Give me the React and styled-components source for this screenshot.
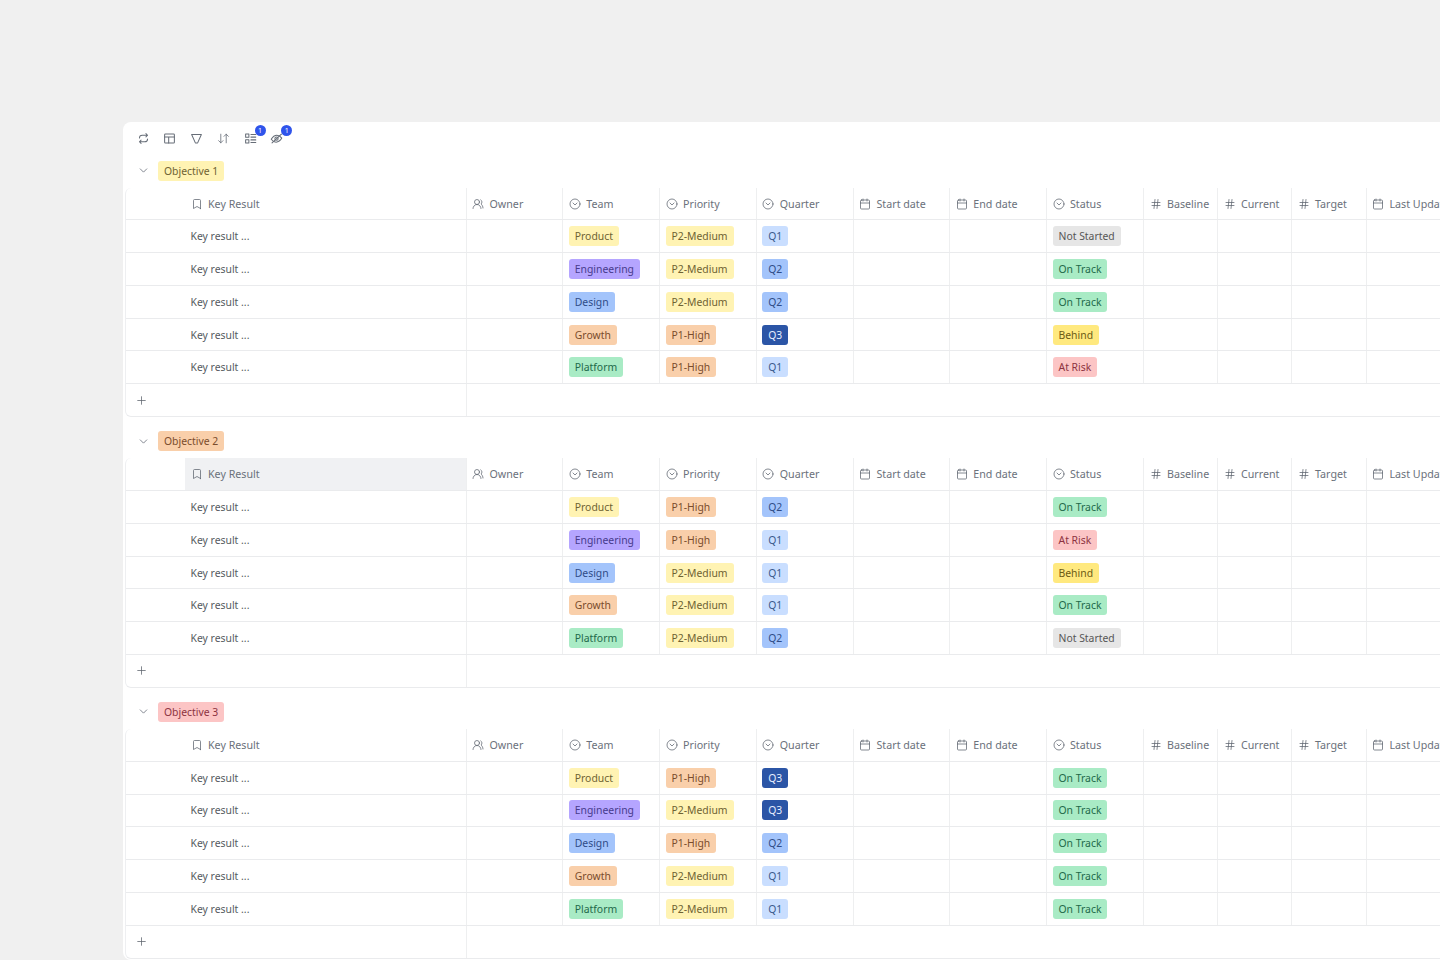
import React from "react";
import styled, { createGlobalStyle } from "styled-components";
import {
  ArrowDownUp,
  Bookmark,
  Calendar,
  ChevronDown,
  CircleChevronDown,
  Hash,
  Plus,
  UsersRound,
} from "lucide-react";

const GlobalStyle = createGlobalStyle`
  html, body {
    margin: 0;
    height: 960px;
    overflow: hidden;
    background: #f0f0f0;
    font-family: "Noto Sans", "Open Sans", sans-serif;
  }
`;

const COLUMNS = "59px 281.5px repeat(6, 96.75px) 97px 74px 74px 74.5px 120px";

const tones = {
  yellow: ["#fff3b3", "#6e6232"],
  gold: ["#ffe97f", "#6b5a14"],
  purple: ["#b5a5ff", "#473b8c"],
  blue: ["#a3c4fb", "#2f4c87"],
  orange: ["#f9cfaa", "#7a4c2c"],
  green: ["#a9ebc5", "#22694a"],
  light: ["#c9deff", "#3b5a8c"],
  navy: ["#2b55a6", "#e6eeff"],
  grey: ["#e6e6e6", "#565656"],
  red: ["#fcc5c5", "#8c3341"],
};

const teamTone = { Product: "yellow", Engineering: "purple", Design: "blue", Growth: "orange", Platform: "green" };
const priorityTone = { "P2-Medium": "yellow", "P1-High": "orange" };
const quarterTone = { Q1: "light", Q2: "blue", Q3: "navy" };
const statusTone = { "Not Started": "grey", "On Track": "green", Behind: "gold", "At Risk": "red" };

const objectives = [
  {
    name: "Objective 1",
    tone: "yellow",
    rows: [
      ["Product", "P2-Medium", "Q1", "Not Started"],
      ["Engineering", "P2-Medium", "Q2", "On Track"],
      ["Design", "P2-Medium", "Q2", "On Track"],
      ["Growth", "P1-High", "Q3", "Behind"],
      ["Platform", "P1-High", "Q1", "At Risk"],
    ],
  },
  {
    name: "Objective 2",
    tone: "orange",
    hovered: true,
    rows: [
      ["Product", "P1-High", "Q2", "On Track"],
      ["Engineering", "P1-High", "Q1", "At Risk"],
      ["Design", "P2-Medium", "Q1", "Behind"],
      ["Growth", "P2-Medium", "Q1", "On Track"],
      ["Platform", "P2-Medium", "Q2", "Not Started"],
    ],
  },
  {
    name: "Objective 3",
    tone: "red",
    rows: [
      ["Product", "P1-High", "Q3", "On Track"],
      ["Engineering", "P2-Medium", "Q3", "On Track"],
      ["Design", "P1-High", "Q2", "On Track"],
      ["Growth", "P2-Medium", "Q1", "On Track"],
      ["Platform", "P2-Medium", "Q1", "On Track"],
    ],
  },
];

const headers = [
  [UsersRound, "Owner"],
  [CircleChevronDown, "Team"],
  [CircleChevronDown, "Priority"],
  [CircleChevronDown, "Quarter"],
  [Calendar, "Start date"],
  [Calendar, "End date"],
  [CircleChevronDown, "Status"],
  [Hash, "Baseline"],
  [Hash, "Current"],
  [Hash, "Target"],
  [Calendar, "Last Update"],
];

const Glyph = ({ children }) => (
  <svg width="13" height="13" viewBox="0 0 16 16" fill="none" stroke="currentColor" strokeWidth="1.25" strokeLinecap="round" strokeLinejoin="round">
    {children}
  </svg>
);

const SyncIcon = () => (
  <Glyph>
    <path d="M3 7.5C3 5.2 4.8 4 6.5 4H13M11 2L13 4L11 6" />
    <path d="M13 8.5C13 10.8 11.2 12 9.5 12H3M5 10L3 12L5 14" />
  </Glyph>
);

const LayoutIcon = () => (
  <Glyph>
    <rect x="2" y="2.5" width="12" height="11" rx="1" />
    <path d="M2 6.2H14M7 6.2V13.5" />
  </Glyph>
);

const FunnelIcon = () => (
  <Glyph>
    <path d="M2 3H14L9.8 12.5C9 14 7 14 6.2 12.5Z" />
  </Glyph>
);

const GroupIcon = () => (
  <Glyph>
    <rect x="2" y="2.5" width="4" height="4" />
    <rect x="2" y="9.5" width="4" height="4" />
    <path d="M8.5 3H14.5M8.5 6.3H14.5M8.5 9.7H14.5M8.5 13H14.5" />
  </Glyph>
);

const HiddenIcon = () => (
  <Glyph>
    <path d="M1.5 9C3.5 5.5 6 4 8.5 4C11 4 13 5.5 14.5 7.5C12.5 11 10 12.5 7.5 12.5C5 12.5 3 11 1.5 9Z" />
    <circle cx="8" cy="8.2" r="2" />
    <path d="M14 2.5L2.5 13.5" />
  </Glyph>
);

const SortIcon = () => <ArrowDownUp size={13} strokeWidth={1.5} />;

const toolIcons = [
  [SyncIcon],
  [LayoutIcon],
  [FunnelIcon],
  [SortIcon],
  [GroupIcon, true],
  [HiddenIcon, true],
];

const Page = styled.div`
  padding: 122px 0 0 123px;
  height: 960px;
  box-sizing: border-box;
  overflow: hidden;
`;

const Card = styled.div`
  width: 1400px;
  height: 838px;
  background: #fff;
  border-radius: 8px 0 0 8px;
  padding: 0 0 0 2px;
  box-sizing: border-box;
`;

const Toolbar = styled.div`
  display: flex;
  align-items: center;
  gap: 13.75px;
  height: 32px;
  padding: 0 0 0 11.5px;
`;

const ToolButton = styled.div`
  position: relative;
  width: 13px;
  height: 13px;
  display: flex;
  color: #666d77;
`;

const Badge = styled.span`
  position: absolute;
  top: -7px;
  right: -9px;
  width: 11px;
  height: 11px;
  border-radius: 50%;
  background: #2f54eb;
  color: #fff;
  font-size: 7px;
  line-height: 11px;
  text-align: center;
`;

const GroupHead = styled.div`
  display: flex;
  align-items: center;
  height: 33px;
`;

const Caret = styled.div`
  display: flex;
  width: 33px;
  padding-left: 11.5px;
  box-sizing: border-box;
  color: #666d77;
`;

const Group = styled.section`
  margin-bottom: 7.6px;
`;

const Table = styled.div`
  margin-top: 0.65px;
  border-left: 1px solid #eeeff1;
  border-bottom: 1px solid #eaebed;
  border-radius: 6px 0 0 6px;
`;

const Row = styled.div`
  display: grid;
  grid-template-columns: ${COLUMNS};
  height: 32.75px;
  box-sizing: border-box;
  border-bottom: 1px solid #eaebed;
`;

const Cell = styled.div`
  display: flex;
  align-items: center;
  padding-left: 5.5px;
  border-right: 1px solid #eeeff0;
  font-size: 10.4px;
  color: #555a60;
  min-width: 0;
  white-space: nowrap;
  overflow: hidden;
  &:first-child {
    border-right: none;
  }
`;

const HeadCell = styled(Cell)`
  gap: 5.5px;
  font-size: 10.7px;
  color: #6b717b;
  background: ${(p) => (p.$hovered ? "#f0f1f3" : "transparent")};
  svg {
    flex: none;
    color: #5c636d;
  }
`;

const Footer = styled.div`
  display: grid;
  grid-template-columns: 340.5px 1fr;
  height: 32px;
`;

const AddCell = styled.div`
  display: flex;
  align-items: center;
  padding-left: 9px;
  color: #5c636d;
  border-right: 1px solid #eeeff0;
`;

const Tag = styled.span`
  display: inline-block;
  height: 20px;
  line-height: 20px;
  padding: 0 6px;
  border-radius: 3px;
  font-size: 10.4px;
  background: ${(p) => tones[p.$tone][0]};
  color: ${(p) => tones[p.$tone][1]};
`;

const Objective = ({ name, tone, hovered, rows }) => (
  <Group>
    <GroupHead>
      <Caret>
        <ChevronDown size={13} strokeWidth={1.5} />
      </Caret>
      <Tag $tone={tone}>{name}</Tag>
    </GroupHead>
    <Table>
      <Row>
        <Cell />
        <HeadCell $hovered={hovered}>
          <Bookmark size={12} strokeWidth={1.5} />
          Key Result
        </HeadCell>
        {headers.map(([Icon, label]) => (
          <HeadCell key={label}>
            <Icon size={12} strokeWidth={1.5} />
            {label}
          </HeadCell>
        ))}
      </Row>
      {rows.map(([team, priority, quarter, status]) => (
        <Row key={team}>
          <Cell />
          <Cell>Key result ...</Cell>
          <Cell />
          <Cell>
            <Tag $tone={teamTone[team]}>{team}</Tag>
          </Cell>
          <Cell>
            <Tag $tone={priorityTone[priority]}>{priority}</Tag>
          </Cell>
          <Cell>
            <Tag $tone={quarterTone[quarter]}>{quarter}</Tag>
          </Cell>
          <Cell />
          <Cell />
          <Cell>
            <Tag $tone={statusTone[status]}>{status}</Tag>
          </Cell>
          <Cell />
          <Cell />
          <Cell />
          <Cell />
        </Row>
      ))}
      <Footer>
        <AddCell>
          <Plus size={13} strokeWidth={1.4} />
        </AddCell>
      </Footer>
    </Table>
  </Group>
);

export default function App() {
  return (
    <>
      <GlobalStyle />
      <Page>
        <Card>
          <Toolbar>
            {toolIcons.map(([Icon, badge], i) => (
              <ToolButton key={i}>
                <Icon />
                {badge && <Badge>1</Badge>}
              </ToolButton>
            ))}
          </Toolbar>
          {objectives.map((o) => (
            <Objective key={o.name} {...o} />
          ))}
        </Card>
      </Page>
    </>
  );
}
